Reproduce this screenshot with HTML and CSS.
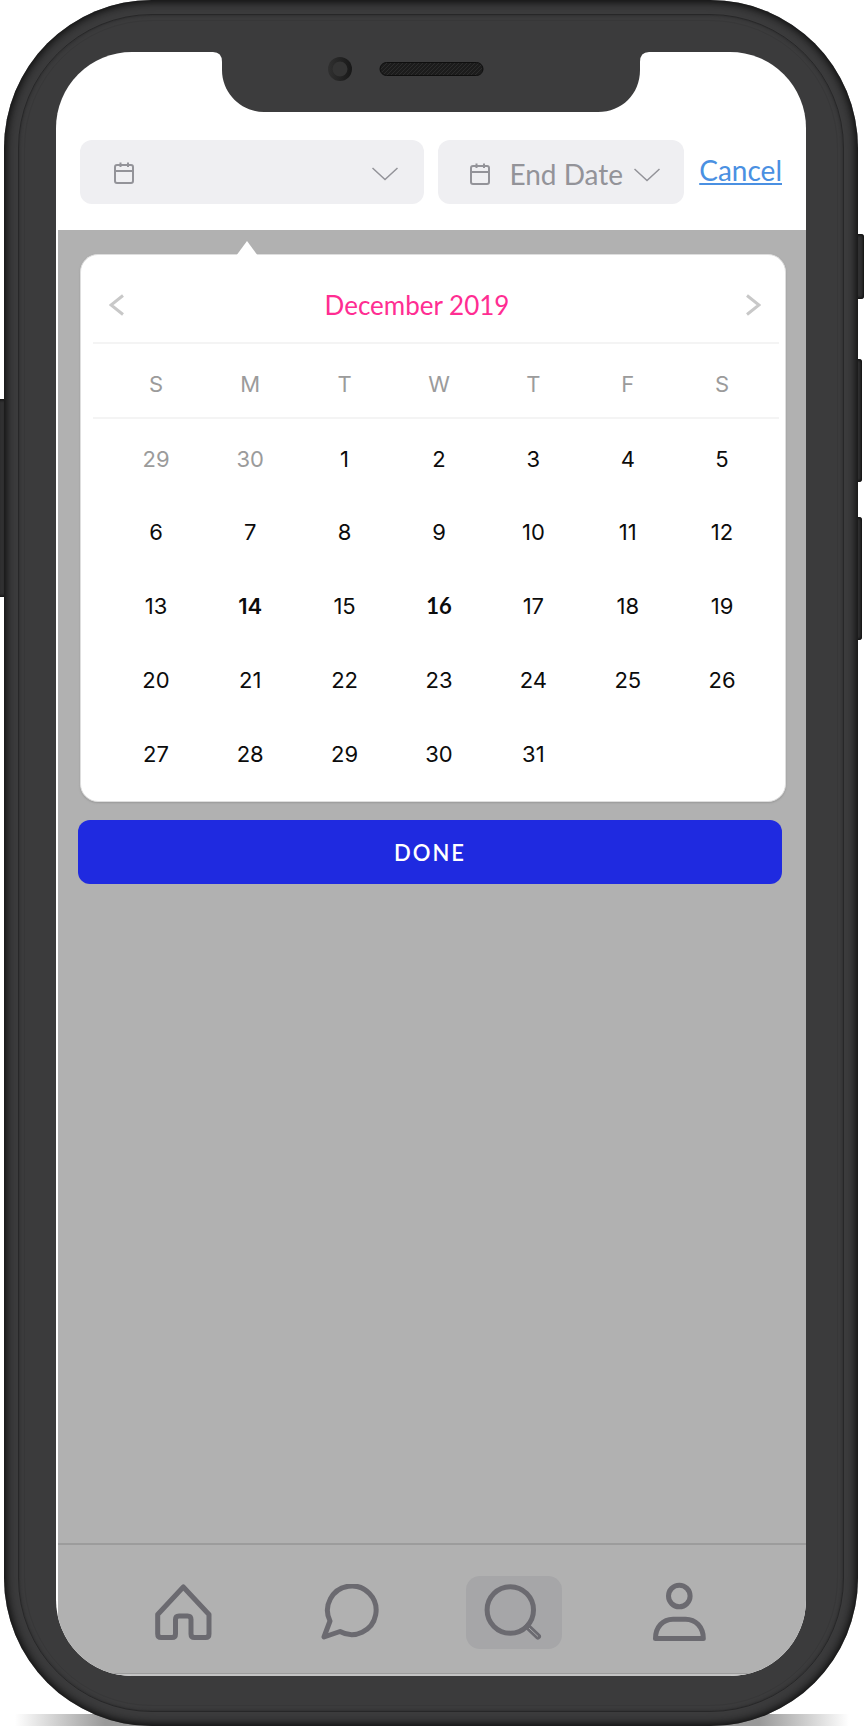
FILE: index.html
```html
<!DOCTYPE html>
<html lang="en">
<head>
<meta charset="utf-8">
<meta name="viewport" content="width=device-width, initial-scale=1">
<title>Select dates</title>
<link rel="stylesheet" href="styles.css">
</head>
<body>
<div class="stage">
  <div class="ground"></div>
  <span class="side-key side-key-left"></span>
  <span class="side-key side-key-mute"></span>
  <span class="side-key side-key-up"></span>
  <span class="side-key side-key-down"></span>
  <div class="phone">
    <div class="screen">
      <header class="filters">
        <button class="field field-start" type="button" aria-label="Start date">
          <svg class="icon-calendar" viewBox="0 0 20 22" aria-hidden="true"><rect x="1" y="3" width="18" height="18" rx="2"/><path d="M1 9H19M6.5 0.5V5M14 0.5V5"/></svg>
          <svg class="icon-chevron" viewBox="0 0 26 14" aria-hidden="true"><path d="M0.5 1L13 12.5L25.5 1"/></svg>
        </button>
        <button class="field field-end" type="button">
          <svg class="icon-calendar" viewBox="0 0 20 22" aria-hidden="true"><rect x="1" y="3" width="18" height="18" rx="2"/><path d="M1 9H19M6.5 0.5V5M14 0.5V5"/></svg>
          <span class="field-label">End Date</span>
          <svg class="icon-chevron" viewBox="0 0 26 14" aria-hidden="true"><path d="M0.5 1L13 12.5L25.5 1"/></svg>
        </button>
        <a class="cancel" href="#">Cancel</a>
      </header>

      <main class="overlay">
        <section class="calendar" aria-label="Calendar">
          <div class="month">
            <button class="month-nav" type="button" aria-label="Previous month">
              <svg viewBox="0 0 15 22" aria-hidden="true"><path d="M14 1.5L2 11L14 20.5"/></svg>
            </button>
            <h1 class="month-name">December 2019</h1>
            <button class="month-nav" type="button" aria-label="Next month">
              <svg viewBox="0 0 15 22" aria-hidden="true"><path d="M1 1.5L13 11L1 20.5"/></svg>
            </button>
          </div>
          <table class="days">
            <thead>
              <tr><th>S</th><th>M</th><th>T</th><th>W</th><th>T</th><th>F</th><th>S</th></tr>
            </thead>
            <tbody>
              <tr><td class="outside">29</td><td class="outside">30</td><td>1</td><td>2</td><td>3</td><td>4</td><td>5</td></tr>
              <tr><td>6</td><td>7</td><td>8</td><td>9</td><td>10</td><td>11</td><td>12</td></tr>
              <tr><td>13</td><td class="marked">14</td><td>15</td><td class="today">16</td><td>17</td><td>18</td><td>19</td></tr>
              <tr><td>20</td><td>21</td><td>22</td><td>23</td><td>24</td><td>25</td><td>26</td></tr>
              <tr><td>27</td><td>28</td><td>29</td><td>30</td><td>31</td><td></td><td></td></tr>
            </tbody>
          </table>
        </section>
        <button class="done" type="button">DONE</button>
      </main>

      <nav class="tabs" aria-label="Main">
        <a class="tab" href="#" aria-label="Home">
          <svg width="57" height="57" viewBox="0 0 57 57" aria-hidden="true"><path d="M28.3 3L2.7 30.5V50Q2.7 53.5 6.2 53.5H17Q20.5 53.5 20.5 50V35.5Q20.5 32 24 32H32.5Q36 32 36 35.5V50Q36 53.5 39.5 53.5H50.5Q54 53.5 54 50V30.5Z"/></svg>
        </a>
        <a class="tab" href="#" aria-label="Messages">
          <svg width="64" height="57" viewBox="-4 0 64 57" aria-hidden="true"><path d="M9 37A24.3 24.3 0 1 1 19 47.5L3 53Z"/></svg>
        </a>
        <a class="tab tab-active" href="#" aria-label="Search" aria-current="page">
          <svg width="96" height="73" viewBox="0 0 96 73" aria-hidden="true"><circle cx="44.3" cy="34" r="23.2"/><path class="handle" d="M61.5 50.5L72 60.5"/><path class="handle-shine" d="M63 52L72 60.5"/></svg>
        </a>
        <a class="tab" href="#" aria-label="Profile">
          <svg width="55" height="62" viewBox="0 0 55 62" aria-hidden="true"><circle cx="27.3" cy="14" r="10.8"/><path d="M3.5 56.5C3.5 45 11 37.2 21 37.2H33.6C43.6 37.2 51.3 45 51.3 56.5Z"/></svg>
        </a>
      </nav>
    </div>

    <div class="notch">
      <svg width="442" height="60" viewBox="0 0 442 60" aria-hidden="true">
        <defs>
          <linearGradient id="lens" x1="0" y1="0" x2="1" y2="0"><stop offset="0" stop-color="#303030"/><stop offset="1" stop-color="#181818"/></linearGradient>
          <pattern id="mesh" width="4" height="4" patternUnits="userSpaceOnUse"><rect width="4" height="4" fill="#1c1c1c"/><path d="M0 4L4 0" stroke="#2c2c2c"/></pattern>
        </defs>
        <path fill="#3c3c3d" d="M0 -2V0H3Q12 0 12 10V18C12 42 32 60 54 60H388C412 60 430 42 430 18V10Q430 0 439 0H442V-2Z"/>
        <circle cx="130" cy="17" r="12" fill="url(#lens)"/>
        <circle cx="130" cy="17" r="7.5" fill="#343434"/>
        <rect x="170" y="10.500" width="103" height="13" rx="6.500" fill="url(#mesh)" stroke="#0e0e0e"/>
      </svg>
    </div>
  </div>
</div>
</body>
</html>
```
FILE: styles.css
```css
* {
  box-sizing: border-box;
}

body {
  margin: 0;
  background: #fff;
  font-family: Lato, "Liberation Sans", sans-serif;
}

button {
  margin: 0;
  border: 0;
  font-family: inherit;
  cursor: pointer;
}

.stage {
  position: relative;
  display: flex;
  min-height: 100vh;
  padding: 0 6px 0 4px;
}

/* Phone body */

.phone {
  position: relative;
  display: flex;
  flex: 1;
  padding: 52px 52px 50px;
  border-radius: 148px;
  background: #3b3b3c;
  box-shadow: inset 0 0 9px 2px #0a0a0a;
}

.phone::before,
.phone::after {
  content: "";
  position: absolute;
  pointer-events: none;
}

.phone::before {
  inset: 14px;
  border: 1px solid #272728;
  border-radius: 134px;
  box-shadow: inset 0 0 3px #272728;
}

.phone::after {
  inset: 20px;
  border: 1px solid #373738;
  border-radius: 128px;
}

.ground {
  position: absolute;
  right: 15px;
  bottom: 0;
  left: 15px;
  height: 12px;
  background: linear-gradient(90deg, transparent, #999 90px, #999 calc(100% - 90px), transparent);
}

.side-key {
  position: absolute;
  border-radius: 3px;
  background: #303031;
  box-shadow: inset 0 0 3px 1px #0c0c0c;
}

.side-key-left {
  top: 399px;
  left: -3px;
  width: 10px;
  height: 198px;
}

.side-key-mute {
  top: 234px;
  right: 0;
  width: 10px;
  height: 65px;
}

.side-key-up {
  top: 359px;
  right: 2px;
  width: 10px;
  height: 123px;
}

.side-key-down {
  top: 517px;
  right: 2px;
  width: 10px;
  height: 123px;
}

.notch {
  position: absolute;
  top: 52px;
  right: 0;
  left: 0;
  display: flex;
  justify-content: center;
}

.notch svg {
  overflow: visible;
}

/* Screen */

.screen {
  display: flex;
  flex: 1;
  flex-direction: column;
  overflow: hidden;
  border-radius: 76px;
  background: #fff;
}

.filters {
  display: flex;
  align-items: center;
  padding: 88px 24px 26px;
}

.field {
  display: flex;
  align-items: center;
  height: 64px;
  border-radius: 12px;
  background: #efeff2;
  color: #939399;
}

.field-start {
  flex: 1;
  justify-content: space-between;
  margin-right: 14px;
  padding: 2px 26px 0 34px;
}

.field-end {
  justify-content: space-between;
  width: 246px;
  margin-right: 15px;
  padding: 4px 24px 0 32px;
}

.field-label {
  margin-left: 8px;
  font-size: 28px;
  line-height: 34px;
}

.icon-calendar,
.icon-chevron {
  flex: none;
  fill: none;
  stroke: #939399;
}

.icon-calendar {
  width: 20px;
  height: 22px;
  stroke-width: 2;
}

.icon-chevron {
  width: 26px;
  height: 14px;
  margin-top: 2px;
  stroke-width: 1.5;
}

.cancel {
  padding-bottom: 4px;
  color: #4a90e2;
  font-size: 28px;
  line-height: 34px;
  text-decoration-thickness: 2px;
  text-underline-offset: 2px;
  text-decoration-skip-ink: none;
}

.overlay {
  flex: 1;
  margin-left: 2px;
  padding: 24px 20px;
  background: #b1b1b1;
}

/* Calendar */

.calendar {
  position: relative;
  margin: 0 0 18px 2px;
  padding: 0 6px 13px 12px;
  border: 1px solid #dedede;
  border-radius: 18px;
  background: #fff;
  box-shadow: 0 1px 2px #999;
}

.calendar::before {
  content: "";
  position: absolute;
  top: -14px;
  left: 155px;
  width: 22px;
  height: 15px;
  background: #fff;
  clip-path: polygon(50% 0, 100% 100%, 0 100%);
}

.month {
  display: flex;
  align-items: center;
  justify-content: space-between;
  height: 89px;
  padding: 12px 18px 0 16px;
  border-bottom: 2px solid #f4f4f4;
}

.month-nav {
  display: flex;
  padding: 0;
  background: none;
}

.month-nav svg {
  width: 15px;
  height: 22px;
  fill: none;
  stroke: #c8c8c8;
  stroke-width: 3;
}

.month-name {
  margin: 0 36px 0 0;
  color: #ff2d92;
  font-size: 26px;
  font-weight: 400;
  line-height: 32px;
}

.days {
  width: 100%;
  border-collapse: collapse;
  table-layout: fixed;
  color: #0c0c0c;
  font-family: Inter, "Liberation Sans", sans-serif;
  font-size: 22px;
  line-height: 28px;
}

.days tr {
  height: 74px;
}

.days th,
.days td {
  padding: 6px 0 0;
  text-align: center;
}

.days th:first-child,
.days td:first-child {
  width: 110px;
  padding-left: 16px;
}

.days th:last-child,
.days td:last-child {
  width: 104px;
  padding-right: 10px;
}

.days thead {
  border-bottom: 2px solid #f4f4f4;
}

.days th {
  color: #9b9b9b;
  font-weight: 400;
}

.days .outside {
  color: #9b9b9b;
}

.days .marked {
  font-weight: 600;
}

.days .today {
  font-family: Lato, "Liberation Sans", sans-serif;
  font-weight: 700;
}

.done {
  display: block;
  width: calc(100% - 4px);
  height: 64px;
  border-radius: 12px;
  background: #1f2ae0;
  color: #fff;
  font-size: 22px;
  font-weight: 600;
  letter-spacing: 2px;
}

/* Tab bar */

.tabs {
  display: grid;
  grid-template-columns: repeat(4, 1fr);
  align-items: center;
  height: 133px;
  margin-left: 2px;
  padding: 4px 44px 0 43px;
  border-top: 2px solid #9c9c9c;
  background: linear-gradient(#b1b1b1, #b1b1b1) 0 0 / 100% calc(100% - 3px) no-repeat, linear-gradient(#9c9c9c 1px, #c4c4c4 1px) 0 100% / 100% 3px no-repeat;
}

.tab {
  display: flex;
  justify-self: center;
  border-radius: 14px;
}

.tab svg {
  fill: none;
  stroke: #6b6a70;
  stroke-linejoin: round;
  stroke-width: 5;
}

.tab-active {
  background: #a6a6a8;
}

.tab .handle {
  stroke-linecap: round;
  stroke-width: 6;
}

.tab .handle-shine {
  stroke: #a6a6a8;
  stroke-width: 1;
}
```
